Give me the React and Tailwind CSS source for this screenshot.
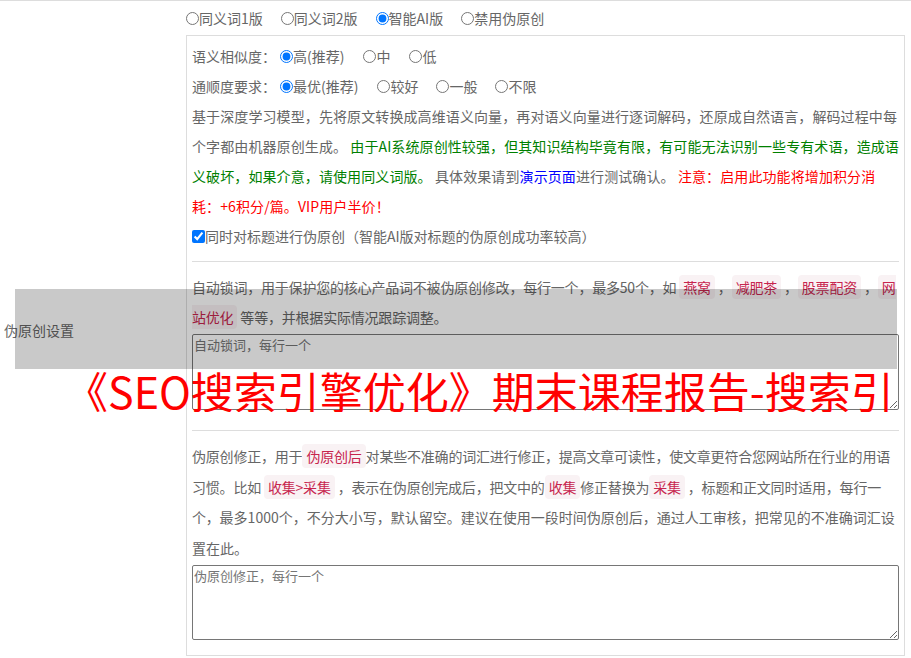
import React from 'react'

const Code = ({ children }) => (
  <code className="bg-[#f9f2f4] text-[#c7254e] px-[4px] py-[2px] rounded-[4px] font-['Noto_Sans_CJK_SC',sans-serif]">
    {children}
  </code>
)

const Radio = ({ name, label, checked, className = '' }) => (
  <label className={`inline-flex items-center mr-[18px] ${className}`}>
    <input
      type="radio"
      name={name}
      defaultChecked={checked}
      className="m-0 w-[13px] h-[13px]"
    />
    <span>{label}</span>
  </label>
)

export default function App() {
  return (
    <div className="relative w-full min-h-[658px] bg-white text-[#666] text-[14px] font-['Noto_Sans_CJK_SC',sans-serif] overflow-hidden">
      <div className="flex border-t border-[#ddd]">
        {/* Label cell */}
        <div className="w-[186px] shrink-0 flex items-center pl-[4px]">
          伪原创设置
        </div>

        {/* Content cell */}
        <div className="flex-1 pr-[6px] pt-[2px] pb-[4px]">
          <div className="flex items-center leading-[30px]">
            <Radio name="mode" label="同义词1版" />
            <Radio name="mode" label="同义词2版" />
            <Radio name="mode" label="智能AI版" checked />
            <Radio name="mode" label="禁用伪原创" />
          </div>

          <div className="mt-[2px] border border-[#ddd] px-[5px] pt-[5px] pb-[5px]">
            <div className="flex items-center leading-[30px]">
              <span>语义相似度：</span>
              <Radio name="sim" label="高(推荐)" checked className="ml-[4px] mr-[19px]" />
              <Radio name="sim" label="中" className="mr-[19px]" />
              <Radio name="sim" label="低" />
            </div>
            <div className="flex items-center leading-[30px]">
              <span>通顺度要求：</span>
              <Radio name="flu" label="最优(推荐)" checked className="ml-[4px] mr-[19px]" />
              <Radio name="flu" label="较好" className="mr-[17px]" />
              <Radio name="flu" label="一般" className="mr-[18px]" />
              <Radio name="flu" label="不限" />
            </div>

            <p className="leading-[30px] tracking-[0.1px]">
              基于深度学习模型，先将原文转换成高维语义向量，再对语义向量进行逐词解码，还原成自然语言，解码过程中每个字都由机器原创生成。{' '}
              <span className="text-[#008000]">
                由于AI系统原创性较强，但其知识结构毕竟有限，有可能无法识别一些专有术语，造成语义破坏，如果介意，请使用同义词版。
              </span>{' '}
              具体效果请到<a href="#" className="text-[#0000ff]">演示页面</a>进行测试确认。{' '}
              <span className="text-[#ff0000]">注意：启用此功能将增加积分消耗：+6积分/篇。VIP用户半价！</span>
            </p>

            <label className="flex items-center leading-[30px]">
              <input type="checkbox" defaultChecked className="m-0 w-[13px] h-[13px]" />
              <span>同时对标题进行伪原创（智能AI版对标题的伪原创成功率较高）</span>
            </label>

            <hr className="mt-[10px] mb-[10px] border-0 border-t border-[#ddd]" />

            {/* Lock words */}
            <p className="leading-[30px] tracking-[-0.2px]">
              自动锁词，用于保护您的核心产品词不被伪原创修改，每行一个，最多50个，如 <Code>燕窝</Code> ，<Code>减肥茶</Code> ，<Code>股票配资</Code> ，<Code>网站优化</Code> 等等，并根据实际情况跟踪调整。
            </p>
            <textarea
              placeholder="自动锁词，每行一个"
              className="block mt-[2px] w-full h-[76px] border border-[#767676] rounded-[2px] text-[13px] leading-[18px] px-[1px] py-[1px] placeholder:text-[#757575] outline-none"
            />

            <hr className="mt-[20px] mb-[10px] border-0 border-t border-[#ddd]" />

            {/* Correction */}
            <p className="leading-[30.5px] tracking-[-0.2px]">
              伪原创修正，用于<Code>伪原创后</Code>对某些不准确的词汇进行修正，提高文章可读性，使文章更符合您网站所在行业的用语习惯。比如 <Code>收集&gt;采集</Code> ，表示在伪原创完成后，把文中的<Code>收集</Code>修正替换为<Code>采集</Code> ，标题和正文同时适用，每行一个，
              <span className="tracking-normal">最多1000个，不分大小写，默认留空。建议在使用一段时间伪原创后，通过人工审核，把常见的不准确词汇设置在此。</span>
            </p>
            <textarea
              placeholder="伪原创修正，每行一个"
              className="block mt-[2px] mb-[10px] w-full h-[75px] border border-[#767676] rounded-[2px] text-[13px] leading-[18px] px-[1px] py-[1px] placeholder:text-[#757575] outline-none"
            />
          </div>
        </div>
      </div>

      {/* Overlay banner */}
      <div className="absolute left-[15px] top-[289px] w-[882px] h-[80px] bg-[rgba(0,0,0,0.21)]" />
      <div className="absolute left-[65px] top-[369px] w-[832px] overflow-hidden whitespace-nowrap text-[43px] leading-none text-[#ff0000]">
        《SEO搜索引擎优化》期末课程报告-搜索引
      </div>
    </div>
  )
}
